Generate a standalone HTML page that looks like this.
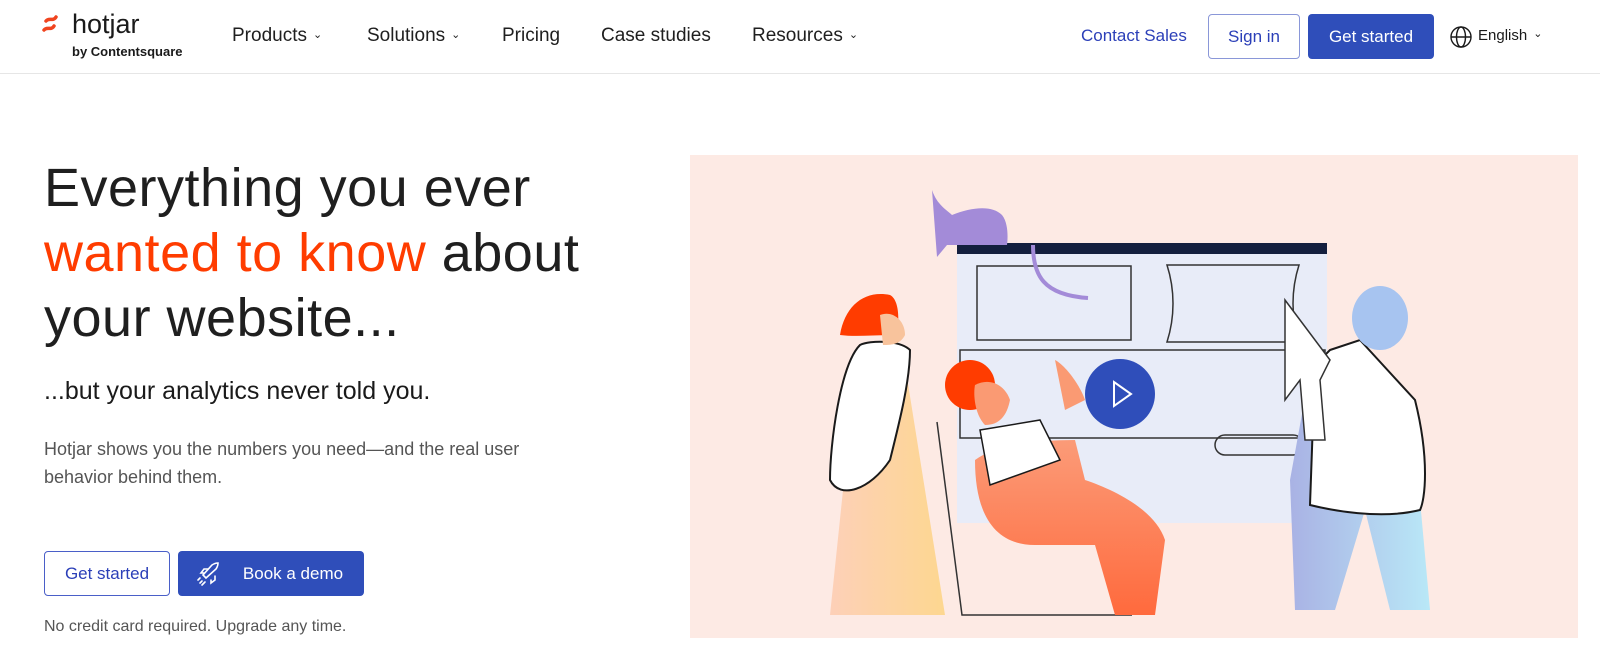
<!DOCTYPE html>
<html><head><meta charset="utf-8"><style>
*{margin:0;padding:0;box-sizing:border-box}
body{width:1600px;height:672px;background:#fff;font-family:"Liberation Sans",sans-serif;position:relative;overflow:hidden;color:#1a1a1a}
.abs{position:absolute}
.nav{top:0;left:0;width:1600px;height:74px;border-bottom:1px solid #e6e6e6}
.navl{font-size:19px;color:#1f1f1f;top:25px}
.chev{font-size:11px;margin-left:6px;vertical-align:3px}
.btn{border-radius:4px;font-size:17px;text-align:center}
h1{position:absolute;left:44px;top:156px;font-size:54px;font-weight:500;line-height:65px;color:#1f1f1f;letter-spacing:0.5px}
h1 span{color:#ff3c00}
</style></head><body>
<div class="abs nav"></div>
<svg class="abs" style="left:42px;top:12px" width="24" height="22" viewBox="0 0 24 22"><path d="M4 9c3-4 7 1 10-4" stroke="#f0441f" stroke-width="3.5" fill="none" stroke-linecap="round"/><path d="M2 18c3-4 7 1 10-4" stroke="#f0441f" stroke-width="3.5" fill="none" stroke-linecap="round"/></svg>
<div class="abs" style="left:72px;top:9px;font-size:27px;font-weight:500;color:#1a1a1a">hotjar</div>
<div class="abs" style="left:72px;top:44px;font-size:13px;font-weight:bold;color:#1a1a1a">by Contentsquare</div>
<div class="abs navl" style="left:232px">Products<span class="chev">⌄</span></div>
<div class="abs navl" style="left:367px">Solutions<span class="chev">⌄</span></div>
<div class="abs navl" style="left:502px">Pricing</div>
<div class="abs navl" style="left:601px">Case studies</div>
<div class="abs navl" style="left:752px">Resources<span class="chev">⌄</span></div>
<div class="abs" style="left:1081px;top:26px;font-size:17px;color:#2b3fb8">Contact Sales</div>
<div class="abs btn" style="left:1208px;top:14px;width:92px;height:45px;border:1px solid #8a97d8;color:#2b3fb8;line-height:43px">Sign in</div>
<div class="abs btn" style="left:1308px;top:14px;width:126px;height:45px;background:#2f4eba;color:#fff;line-height:45px;font-weight:500">Get started</div>
<svg class="abs" style="left:1449px;top:25px" width="24" height="24" viewBox="0 0 24 24" fill="none" stroke="#1a1a1a" stroke-width="1.4"><circle cx="12" cy="12" r="10"/><ellipse cx="12" cy="12" rx="4.5" ry="10"/><path d="M2 12h20"/></svg>
<div class="abs" style="left:1478px;top:27px;font-size:15px;color:#1a1a1a">English<span class="chev">⌄</span></div>

<h1>Everything you ever<br><span>wanted to know</span> about<br>your website...</h1>
<div class="abs" style="left:44px;top:377px;font-size:25px;font-weight:500;color:#1a1a1a">...but your analytics never told you.</div>
<div class="abs" style="left:44px;top:435px;font-size:18px;line-height:28px;color:#555;width:545px">Hotjar shows you the numbers you need—and the real user behavior behind them.</div>
<div class="abs btn" style="left:44px;top:551px;width:126px;height:45px;border:1px solid #4a5fc8;color:#2b3fb8;line-height:43px">Get started</div>
<div class="abs btn" style="left:178px;top:551px;width:186px;height:45px;background:#2f4eba;color:#fff;line-height:45px;font-weight:500;padding-left:44px">Book a demo</div>
<svg class="abs" style="left:196px;top:560px" width="28" height="28" viewBox="0 0 28 28" fill="none" stroke="#fff" stroke-width="1.6" stroke-linecap="round"><path d="M10 18l-3-3 9-10c3-2 6-2 6-2s0 3-2 6l-10 9z"/><path d="M8 13l-3 0 3-4 4 0M15 20l0 3 4-3 0-4"/><path d="M6 21l-2 2M9 22l-3 3M4 18l-2 2"/></svg>
<div class="abs" style="left:44px;top:618px;font-size:16px;color:#555">No credit card required. Upgrade any time.</div>

<svg class="abs" style="left:0;top:0" width="1600" height="672">
<defs>
<linearGradient id="g1" x1="0" x2="1"><stop offset="0" stop-color="#fdd0b8"/><stop offset="1" stop-color="#fdd790"/></linearGradient>
<linearGradient id="g2" x1="0" x2="0" y1="0" y2="1"><stop offset="0" stop-color="#fb9b78"/><stop offset="1" stop-color="#ff6a3d"/></linearGradient>
<linearGradient id="g3" x1="0" x2="1"><stop offset="0" stop-color="#a9b2e4"/><stop offset="1" stop-color="#b9e8f7"/></linearGradient>
</defs>
<rect x="690" y="155" width="888" height="483" fill="#fdeae4"/>
<rect x="957" y="243" width="370" height="280" fill="#e8ecf8"/>
<rect x="957" y="243" width="370" height="11" fill="#141f3e"/>
<g fill="none" stroke="#333" stroke-width="1.5">
<rect x="977" y="266" width="154" height="74"/>
<path d="M1167 265h132c-8 25-8 52 0 77h-132c8-25 8-52 0-77z"/>
<rect x="960" y="350" width="365" height="88" stroke-width="1.5"/>
<rect x="1215" y="435" width="88" height="20" rx="10"/>
<path d="M937 422l25 193h170"/>
</g>
<path d="M932 190c5 15 15 20 20 25 20-8 40-10 50 0 8 10 5 30 5 30h-60l-10 12z" fill="#a38bd8"/>
<path d="M1033 245c0 30 10 50 55 53" stroke="#a38bd8" stroke-width="4" fill="none"/>
<path d="M830 615l25-240 50-10 40 250z" fill="url(#g1)"/>
<path d="M860 345c-20 20-30 100-30 135 10 20 40 10 60-20 10-40 20-80 20-110-10-10-40-10-50-5z" fill="#fff" stroke="#1a1a1a" stroke-width="2"/>
<path d="M840 335c5-30 25-45 50-40 10 5 10 30 5 40-20 0-40 2-55 0z" fill="#ff3c00"/>
<path d="M880 315c12-5 25 5 25 20-5 10-15 10-22 10z" fill="#f8c39c"/>
<path d="M975 460c20-15 60-20 100-20l10 40c30 10 70 30 80 60l-10 75h-40l-20-70-60 0c-40 0-60-30-60-85z" fill="url(#g2)"/>
<path d="M980 430l60-10 20 40-70 25z" fill="#fff" stroke="#1a1a1a" stroke-width="1.5"/>
<circle cx="970" cy="385" r="25" fill="#ff3c00"/>
<path d="M975 385c15-8 30 0 35 15-3 15-10 25-25 25-10-10-12-30-10-40z" fill="#fa9a73"/>
<path d="M1055 360c10 5 25 25 30 40l-20 10z" fill="#fa9a73"/>
<path d="M1290 480l20-110 60 0 50 130 10 110h-40l-25-100-30 100h-40z" fill="url(#g3)"/>
<path d="M1330 350l30-10 55 60c15 60 10 100 5 110-40 10-90 0-110-5l5-140z" fill="#fff" stroke="#1a1a1a" stroke-width="2"/>
<ellipse cx="1380" cy="318" rx="28" ry="32" fill="#a7c4f0"/>
<path d="M1285 300l45 60-10 20 5 60h-20l-5-60-15 20z" fill="#fff" stroke="#333" stroke-width="1.5"/>
<circle cx="1120" cy="394" r="35" fill="#2f4eba"/>
<path d="M1114 382v24l17-12z" fill="none" stroke="#fff" stroke-width="2"/>
</svg>
</body></html>
